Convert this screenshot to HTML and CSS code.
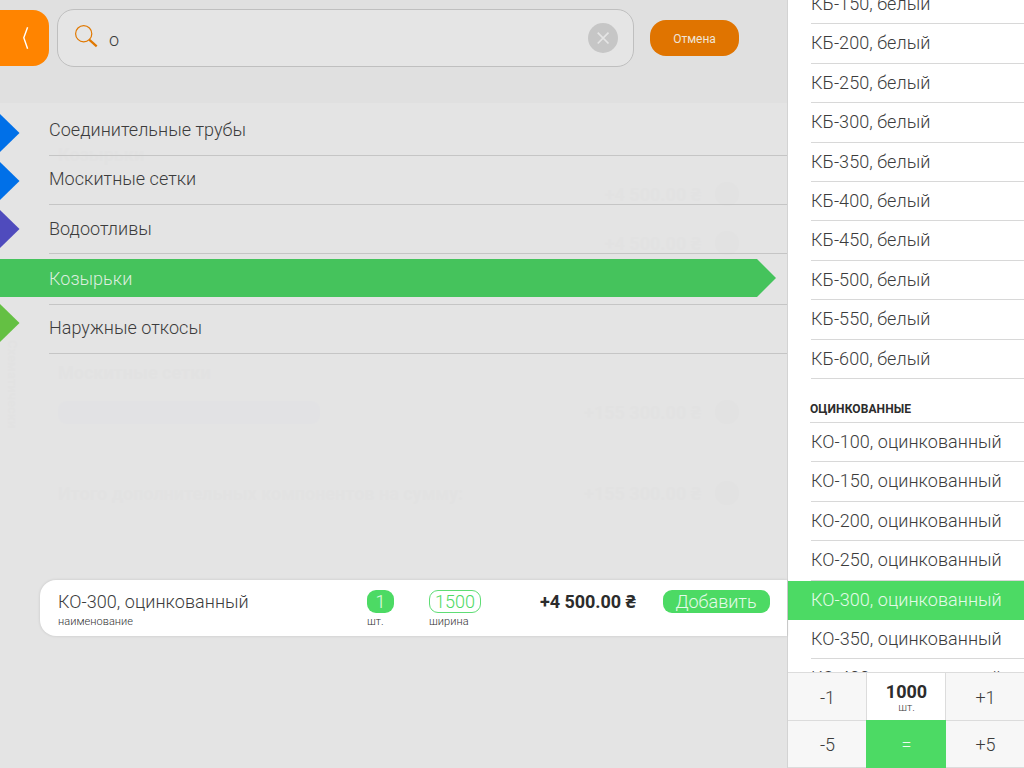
FILE: index.html
```html
<!DOCTYPE html>
<html lang="ru">
<head>
<meta charset="utf-8">
<title>Дополнительные компоненты</title>
<link rel="stylesheet" href="styles.css">
</head>
<body>
<div class="app">
  <main class="main">
    <header class="top">
      <button class="back" aria-label="Назад"><svg width="8" height="24" viewBox="0 0 8 24"><path d="M5.6 1.2L1.8 11.8L5.6 22.8" fill="none" stroke="#fff" stroke-width="1.4"/></svg></button>
      <div class="search">
        <svg class="lens" width="24" height="24" viewBox="0 0 24 24"><circle cx="8.7" cy="8.7" r="8.1" fill="none" stroke="#e07800" stroke-width="1.2"/><path d="M14.2 14.6L21.7 21.4" stroke="#e07800" stroke-width="2.2"/></svg>
        <span class="query">о</span>
        <button class="clear" aria-label="Очистить"><svg width="30" height="30" viewBox="0 0 30 30"><circle cx="15" cy="15" r="15" fill="#c6c6c6"/><path d="M9.7 9.7L20.5 20.5M20.5 9.7L9.7 20.5" stroke="#e5e5e5" stroke-width="1.7"/></svg></button>
      </div>
      <button class="cancel">Отмена</button>
    </header>
    <div class="ghost">
      <b class="g g1">Козырьки</b>
      <span class="g g-price g2">+4 500.00 ₴ <i></i></span>
      <span class="g g-price g3">+4 500.00 ₴ <i></i></span>
      <b class="g g4">Москитные сетки</b>
      <span class="g g5"></span>
      <span class="g g-price g6">+155 300.00 ₴ <i></i></span>
      <b class="g g7">Итого дополнительных компонентов на сумму:</b>
      <span class="g g-price g8">+155 300.00 ₴ <i></i></span>
      <span class="g g9">Схематически</span>
    </div>
    <nav class="cats">
      <a class="cat first blue"><span>Соединительные трубы</span></a>
      <a class="cat second blue"><span>Москитные сетки</span></a>
      <a class="cat violet"><span>Водоотливы</span></a>
      <a class="cat active"><span>Козырьки</span></a>
      <a class="cat lime"><span>Наружные откосы</span></a>
    </nav>
    <section class="item">
      <div class="field name"><span class="val">КО-300, оцинкованный</span><small>наименование</small></div>
      <div class="field qty"><span class="pill solid">1</span><small>шт.</small></div>
      <div class="field width"><span class="pill outline">1500</span><small>ширина</small></div>
      <div class="price">+4 500.00 ₴</div>
      <button class="pill solid add">Добавить</button>
    </section>
  </main>
  <aside class="side">
    <div class="list">
      <div class="row">КБ-150, белый</div>
      <div class="row">КБ-200, белый</div>
      <div class="row">КБ-250, белый</div>
      <div class="row">КБ-300, белый</div>
      <div class="row">КБ-350, белый</div>
      <div class="row">КБ-400, белый</div>
      <div class="row">КБ-450, белый</div>
      <div class="row">КБ-500, белый</div>
      <div class="row">КБ-550, белый</div>
      <div class="row">КБ-600, белый</div>
      <div class="group">ОЦИНКОВАННЫЕ</div>
      <div class="row low">КО-100, оцинкованный</div>
      <div class="row low">КО-150, оцинкованный</div>
      <div class="row low">КО-200, оцинкованный</div>
      <div class="row low">КО-250, оцинкованный</div>
      <div class="row low selected">КО-300, оцинкованный</div>
      <div class="row low">КО-350, оцинкованный</div>
      <div class="row low">КО-400, оцинкованный</div>
    </div>
    <div class="pad">
      <button>-1</button>
      <div class="count"><b>1000</b><small>шт.</small></div>
      <button>+1</button>
      <button>-5</button>
      <button class="equals">=</button>
      <button>+5</button>
    </div>
  </aside>
</div>
</body>
</html>
```
FILE: styles.css
```css
* { box-sizing: border-box; }
body { margin: 0; font-family: Roboto, "Noto Sans", sans-serif; font-weight: 300; color: #3c3c3c; }
button { border: 0; padding: 0; margin: 0; background: none; font: inherit; color: inherit; }
svg { display: block; }
.app { display: grid; grid-template-columns: 787px 237px; width: 1024px; height: 768px; overflow: hidden; background: #e4e4e4; }
.main { position: relative; display: flex; flex-direction: column; min-width: 0; }

.top { height: 103px; flex: none; display: flex; align-items: flex-start; background: #e0e0e0; }
.back { width: 49px; height: 56px; margin-top: 10px; padding-left: 22px; background: #ff8400; border-radius: 0 16px 16px 0; display: flex; align-items: center; }
.search { width: 577px; height: 58px; margin: 9px 0 0 8px; padding: 0 15px 0 17px; display: flex; align-items: center; background: #e5e5e5; border: 1px solid #bfbfbf; border-radius: 17px; }
.lens { margin-top: -2px; }
.query { margin-left: 10px; padding-top: 3px; font-size: 18px; flex: 1; }
.cancel { width: 89px; height: 36px; margin: 20px 0 0 16px; padding-top: 1px; border-radius: 16px; background: #e07400; color: #efe4d8; font-size: 12px; font-weight: 400; }

.cats { position: relative; }
.cat { display: flex; align-items: center; position: relative; height: 49px; margin-left: 49px; padding-bottom: 2px; border-bottom: 1px solid #c5c5c5; font-size: 18px; letter-spacing: .03px; }
.cat.first { height: 53px; padding-bottom: 0; }
.cat.second { padding-bottom: 3px; }
.cat::before { content: ""; position: absolute; left: -49px; top: 6px; width: 19.5px; height: 38px; background: currentColor; clip-path: polygon(0 0, 100% 50%, 0 100%); }
.cat.first::before { top: 11px; }
.cat.blue::before { background: #0070e8; }
.cat.violet::before { background: #4f4bbd; top: 5px; }
.cat.lime { padding-bottom: 3px; }
.cat.lime::before { background: #64c043; top: -1px; }
.cat.active { height: 51px; padding-bottom: 2px; color: #dceedf; }
.cat.active span { position: relative; }
.cat.active::before { width: 776px; top: 5px; background: #45c35c; clip-path: polygon(0 0, 757px 0, 100% 50%, 757px 100%, 0 100%); }

.item { display: flex; align-items: flex-start; height: 56px; margin: 226px 0 0 40px; padding: 10px 0 0 18px; background: #fff; border-radius: 16px 0 0 16px; box-shadow: 0 0 3px rgba(0,0,0,.14); }
.field { display: flex; flex-direction: column; align-items: flex-start; height: 39px; }
.field small { font-size: 11px; line-height: 14px; margin-top: auto; letter-spacing: .05px; color: #333; }
.val { font-size: 18px; line-height: 24px; letter-spacing: .05px; }
.name { width: 309px; }
.qty { width: 62px; }
.width { width: 111px; }
.pill { display: flex; align-items: center; justify-content: center; height: 23px; border-radius: 9px; font-size: 18px; }
.solid { width: 27px; background: #4cda64; color: #e4fae8; }
.outline { width: 52px; border: 1px solid #5fdd75; color: #4cda64; }
.price { width: 122.5px; font-size: 18px; font-weight: 700; line-height: 24px; letter-spacing: -.04px; color: #2c2c2c; }
.add { width: 107px; }

.side { display: flex; flex-direction: column; height: 768px; background: #fff; border-left: 1px solid #d3d3d3; }
.list { height: 672px; flex: none; overflow: hidden; }
.list .row:first-child { margin-top: -15.2px; }
.row { height: 39.45px; margin-left: 23px; border-bottom: 1px solid #d8d8d8; font-size: 18px; line-height: 37.6px; letter-spacing: .05px; white-space: nowrap; }
.low { line-height: 38.8px; }
.group { height: 43.6px; margin-left: 22px; padding-top: 22.5px; border-bottom: 1px solid #d8d8d8; font-size: 12px; line-height: 14px; letter-spacing: .1px; font-weight: 700; color: #2c2c2c; }
.selected { margin-left: 0; padding-left: 23px; background: #4cda64; border-color: #4cda64; color: #e4fae8; }
.pad { flex: none; height: 96px; display: grid; grid-template-columns: 78px 80px 78px; grid-template-rows: 48px 47px; border-top: 1px solid #dcdcdc; background: #f7f7f7; }
.pad > * { display: flex; align-items: center; justify-content: center; font-size: 18px; line-height: 20px; padding: 2px 0 0 1px; border-bottom: 1px solid #dcdcdc; }
.pad .count { flex-direction: column; background: #fff; border: 1px solid #dcdcdc; border-top: 0; padding-top: 3px; }
.count b { font-size: 18px; line-height: 19px; font-weight: 700; color: #2c2c2c; }
.count small { font-size: 11px; line-height: 13px; }
.pad .equals { margin-top: -1px; background: #4cda64; color: #effcf1; border-color: #4cda64; }

/* Dimmed order sheet under the search overlay */
.ghost { position: absolute; inset: 0; opacity: .005; color: #000; font-size: 18px; }
.g { position: absolute; white-space: nowrap; font-weight: 700; }
.g1 { left: 58px; top: 144px; }
.g-price { right: 48px; display: flex; gap: 14px; align-items: center; }
.g-price i { width: 24px; height: 24px; border-radius: 50%; background: #000; }
.g2 { top: 182px; }
.g3 { top: 231px; }
.g4 { left: 58px; top: 362px; }
.g5 { left: 58px; top: 401px; width: 262px; height: 23px; border-radius: 9px; background: #0050ff; }
.g6 { top: 400px; }
.g7 { left: 58px; top: 483px; }
.g8 { top: 481px; }
.g9 { left: 5px; top: 340px; font-size: 13px; writing-mode: vertical-rl; }
```
